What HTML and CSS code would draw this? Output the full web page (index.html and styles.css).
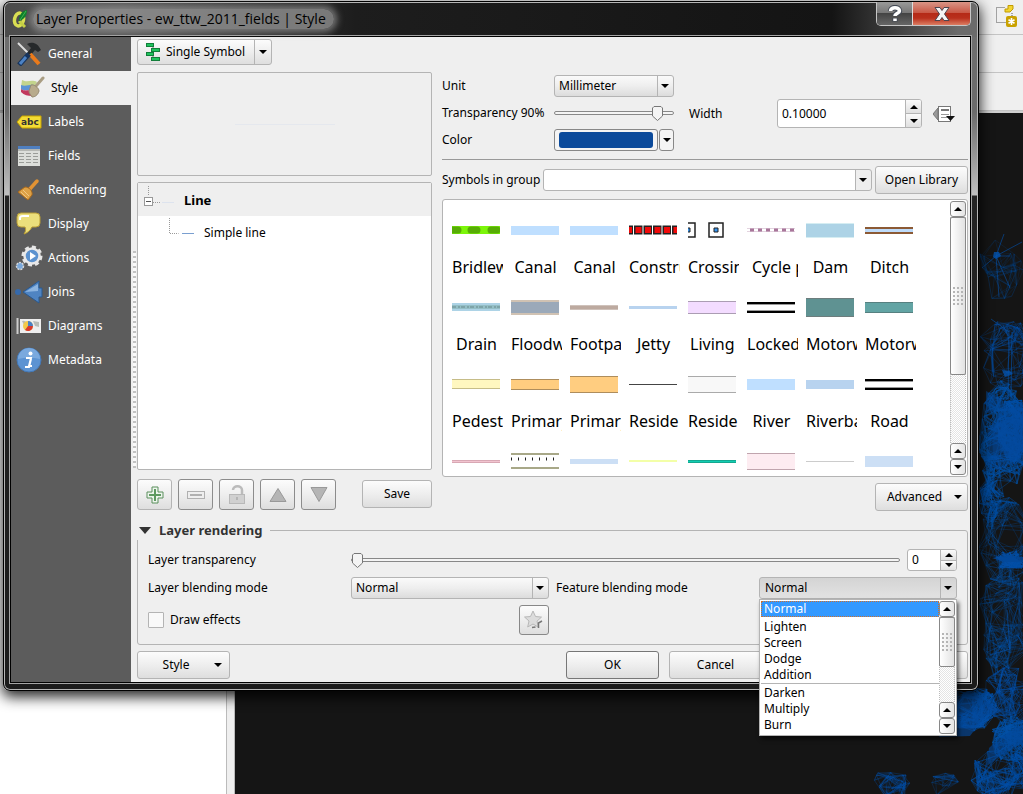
FILE: index.html
```html
<!DOCTYPE html>
<html lang="en">
<head>
<meta charset="utf-8">
<title>Layer Properties</title>
<link rel="stylesheet" href="styles.css">
</head>
<body>
<div class="desktop">
  <div class="toolbars">
    <div class="toolbar first">
      <svg width="22" height="24" viewBox="0 0 22 24"><path d="M17 9V18.500H1.500V3.500H10" fill="none" stroke="#555" stroke-dasharray="1 1"/><path d="M10 5h3V1.500h5V5l-3 3h-5z" fill="#f2d531" stroke="#c29b00"/><rect x="11" y="12" width="11" height="11" rx="2" fill="#c9a100"/><path d="M16.500 14v7M13.500 15.800l6 3.400M19.500 15.800l-6 3.400" stroke="#fff" stroke-width="1.600"/></svg>
    </div>
    <div class="toolbar"></div>
    <div class="toolbar"></div>
  </div>
  <div class="workspace">
    <div class="layers"></div>
    <div class="map">
      <svg id="network" class="network" width="160" height="680" viewBox="863 114 160 680"></svg>
    </div>
  </div>
</div>

<section class="dialog" aria-label="Layer Properties">
  <header class="titlebar">
    <svg class="logo" width="20" height="20" viewBox="0 0 20 20"><ellipse cx="8" cy="10.500" rx="4.500" ry="6.500" fill="none" stroke="#d9de52" stroke-width="3.500" transform="rotate(12 8 10.500)"/><path d="M8 12l6 6" stroke="#c5cf45" stroke-width="3"/><path d="M8 12C8 7 10 2 16 1c0 5-2 9-8 11z" fill="#0d7f2a"/><path d="M9 11l6-9" stroke="#3fb24f"/></svg>
    <h1>Layer Properties - ew_ttw_2011_fields | Style</h1>
    <div class="caption">
      <button class="help" aria-label="Help"><svg width="16" height="18" viewBox="0 0 16 18"><path d="M3.500 6c0-4.500 9-4.500 9 0 0 2.500-4.500 2-4.500 5M8 13v3.500" fill="none" stroke="#444a55" stroke-width="5.500"/><path d="M3.500 6c0-4.500 9-4.500 9 0 0 2.500-4.500 2-4.500 5M8 13.500v2.500" fill="none" stroke="#fff" stroke-width="3.500"/></svg></button>
      <button class="close" aria-label="Close"><svg width="16" height="14" viewBox="0 0 16 14"><path d="M1 .5h5l2 3 2-3h5l-4.500 6.500 4.500 6.500h-5l-2-3-2 3h-5l4.500-6.500z" fill="#f4f4f4" stroke="#4d4650"/></svg></button>
    </div>
  </header>

  <div class="client">
    <nav class="sidebar">
      <a href="#general"><svg width="24" height="24" viewBox="0 0 24 24"><path d="M1 1l11 11" stroke="#ddd" stroke-width="2"/><path d="M10 2c5-3 11-1 14 6l-3 2-3-2-5 6-3-3 4-5z" fill="#26292b"/><path d="M13 12l9 10" stroke="#ea7a1b" stroke-width="4"/><path d="M12 12L2 23" stroke="#17345c" stroke-width="5"/><path d="M9 15l-6 7" stroke="#4c82c4" stroke-width="3"/></svg><span>General</span></a>
      <a href="#style" class="current"><svg width="26" height="24" viewBox="0 0 26 24"><path d="M3 4c6 3 9-1 15 2l-3 5c-4-2-8 1-13 0z" fill="#c3d48c"/><path d="M2 9c5 2 8-1 13 0l-1 6c-5-2-8 1-12-2z" fill="#5b94d6"/><path d="M2 13c4 3 8 0 12 2l-1 5c-4 0-8-1-11-4z" fill="#c2385d"/><path d="M17 10l7-8" stroke="#a99d83" stroke-width="3" stroke-linecap="round"/><path d="M12 9c3-1 8 3 8 6-1 4-4 6-7 6-2-3-3-4-3-6z" fill="#b8ab8c" stroke="#968b72"/></svg><span>Style</span></a>
      <a href="#labels"><svg width="26" height="24" viewBox="0 0 26 24"><path d="M6 6h19v12H6L1 12z" fill="#f3dc35" stroke="#c9a400"/><text class="abc" x="5" y="15">abc</text></svg><span>Labels</span></a>
      <a href="#fields"><svg width="24" height="24" viewBox="0 0 24 24"><rect x="1" y="2" width="22" height="20" fill="#dcdeda"/><path d="M1 3.500h22" stroke="#4f7fc0" stroke-width="3"/><path d="M1 6h22" stroke="#b5b7b3" stroke-width="2"/><path d="M2 9.500h20M2 12.500h20M2 15.500h20M2 18.500h20" stroke="#9a9c98" stroke-dasharray="5 2"/></svg><span>Fields</span></a>
      <a href="#rendering"><svg width="24" height="24" viewBox="0 0 24 24"><path d="M12 12l8-9" stroke="#e19334" stroke-width="3.500" stroke-linecap="round"/><path d="M8 9c4 0 8 4 7 8l-4 5L1 14z" fill="#dda146" stroke="#a9691c"/><path d="M4 14l6 6M6 12l6 6" stroke="#f0c682"/></svg><span>Rendering</span></a>
      <a href="#display"><svg width="26" height="24" viewBox="0 0 26 24"><path d="M5 1h15q4 0 4 4v6q0 4-4 4h-4c-2 4-5 6-8 7 2-3 2-5 1-7H5q-4 0-4-4V5q0-4 4-4z" fill="#ebdf7c" stroke="#b99d35"/><path d="M4 8V6q0-2 3-2h6" fill="none" stroke="#fff" stroke-width="2"/></svg><span>Display</span></a>
      <a href="#actions"><svg width="26" height="26" viewBox="0 0 26 26"><circle cx="16" cy="11" r="9" fill="none" stroke="#e6e6e6" stroke-width="3" stroke-dasharray="4 3"/><circle cx="16" cy="11" r="7.500" fill="#5c92cf" stroke="#e8e8e8" stroke-width="2.500"/><path d="M14 7l6 4-6 4z" fill="#fff"/><circle cx="4" cy="21" r="3.500" fill="#7ba9dc" stroke="#d8d8d8" stroke-width="1.500" stroke-dasharray="2 1"/></svg><span>Actions</span></a>
      <a href="#joins"><svg width="28" height="24" viewBox="0 0 28 24"><circle cx="3" cy="12" r="3" fill="#3569ab"/><path d="M8 12L24 1v7h3v9h-3v6z" fill="#4f84c2" stroke="#29588f"/><path d="M10 12L23 4v7z" fill="#8cb4e0"/></svg><span>Joins</span></a>
      <a href="#diagrams"><svg width="26" height="24" viewBox="0 0 26 24"><rect x="4" y="5" width="21" height="14" fill="#eee"/><path d="M6 7q3-1 5 2l-2 4zM17 7l6 1v5l-4-1z" fill="#b8bbb6"/><path d="M1.500 4v16" stroke="#ccc" stroke-width="2"/><circle cx="12" cy="12" r="5" fill="#f2c94a"/><path d="M12 12V7a5 5 0 0 1 5 5z" fill="#4a7fc4"/><path d="M12 12h5a5 5 0 0 1-8 4z" fill="#d8392d"/></svg><span>Diagrams</span></a>
      <a href="#metadata"><svg width="26" height="26" viewBox="0 0 26 26"><circle cx="13" cy="13" r="12" fill="#5c93d2" stroke="#4478b6"/><path d="M2 12A11 11 0 0 1 24 12Q13 9 2 12z" fill="#7aa9de"/><circle cx="14.500" cy="6.500" r="2" fill="#fff"/><path d="M10 11h5l-2 8h3M9 20h4l2-8" fill="none" stroke="#fff" stroke-width="2"/></svg><span>Metadata</span></a>
    </nav>
    <div class="splitter"></div>

    <main class="panel">
      <div class="renderer">
        <button class="btn split"><svg width="14" height="20" viewBox="0 0 14 20"><path d="M7 3v13" stroke="#777"/><g fill="#1fc35d" stroke="#137e3b"><rect x=".5" y="1.500" width="7" height="3"/><rect x="5.500" y="6.500" width="8" height="3"/><rect x=".5" y="10.500" width="7" height="3"/><rect x="5.500" y="15.500" width="8" height="3"/></g></svg><span>Single Symbol</span><i class="drop"></i></button>
      </div>

      <div class="columns">
        <div class="left">
          <div class="preview"><div></div></div>
          <div class="tree">
            <div class="node root"><svg width="36" height="32" viewBox="0 0 36 32"><path d="M10.500 2v10M15 18.500h8" stroke="#999" stroke-dasharray="1 1"/><rect x="6.500" y="13.500" width="8" height="8" fill="#fff" stroke="#999"/><path d="M8 17.500h5" stroke="#555"/><path d="M24 18.500h12" stroke="#dde3ee"/></svg><b>Line</b></div>
            <div class="node"><svg width="56" height="32" viewBox="0 0 56 32"><path d="M31.500 1v15.500h9" fill="none" stroke="#999" stroke-dasharray="1 1"/><path d="M44 16.500h16" stroke="#7a9fd0"/></svg><span>Simple line</span></div>
          </div>
          <div class="tools">
            <button class="btn tool" aria-label="Add"><svg width="20" height="20" viewBox="0 0 20 20"><path d="M7 2h6v5h5v6h-5v5H7v-5H2V7h5z" fill="#eef5ee" stroke="#5a8f5c"/><path d="M10 4v12M4 10h12" stroke="#5f9a61" stroke-width="2"/></svg></button>
            <button class="btn tool dark" aria-label="Remove"><svg width="20" height="20" viewBox="0 0 20 20"><rect x="1.500" y="6.500" width="17" height="7" fill="#eee" stroke="#b0b0b0"/><path d="M4 10h12" stroke="#b0b0b0" stroke-width="2"/></svg></button>
            <button class="btn tool dark" aria-label="Lock"><svg width="20" height="20" viewBox="0 0 20 20"><path d="M6 5c0-5 9-5 9 0v5" fill="none" stroke="#bbb" stroke-width="2.500"/><rect x="2.500" y="9.500" width="15" height="9" fill="#d0d0d0" stroke="#b8b8b8"/><path d="M10 12v3" stroke="#999"/></svg></button>
            <button class="btn tool dark" aria-label="Move up"><svg width="20" height="20" viewBox="0 0 20 20"><path d="M10 3.500l8 13H2z" fill="#b5b5b5" stroke="#999"/></svg></button>
            <button class="btn tool dark" aria-label="Move down"><svg width="20" height="20" viewBox="0 0 20 20"><path d="M10 16.500l8-14H2z" fill="#b5b5b5" stroke="#999"/></svg></button>
            <button class="btn save">Save</button>
          </div>
        </div>

        <div class="right">
          <div class="props">
            <div class="fields">
              <label for="unit">Unit</label>
              <span class="combo"><select id="unit"><option>Millimeter</option></select></span>
              <label for="alpha">Transparency 90%</label>
              <input id="alpha" type="range" min="0" max="100" value="91">
              <span>Color</span>
              <span class="color"><button class="swatch" aria-label="Color"><i></i></button><button class="more" aria-label="Color menu"><i class="drop"></i></button></span>
            </div>
            <div class="width">
              <label for="width">Width</label>
              <span class="spin"><input id="width" type="text" value="0.10000"><span class="steps"><button aria-label="Increase"><i class="up"></i></button><button aria-label="Decrease"><i class="drop"></i></button></span></span>
              <button class="override" aria-label="Data defined override"><svg width="22" height="18" viewBox="0 0 22 18"><path d="M5 3v12L0 9z" fill="#999" stroke="#777"/><rect x="5.500" y="1.500" width="12" height="15" fill="#fff" stroke="#777"/><path d="M8 5h8" stroke="#777" stroke-width="2"/><path d="M8 9.500h8M8 12.500h8" stroke="#999"/><path d="M13 11h9l-4.500 5z" fill="#111"/></svg></button>
            </div>
          </div>
          <hr>
          <div class="group">
            <label for="group">Symbols in group</label>
            <span class="combo edit"><select id="group"><option></option></select></span>
            <button class="btn">Open Library</button>
          </div>
          <div class="library">
            <ul class="symbols">
              <li><span><svg width="48" height="8"><path d="M0 4h48" stroke="#7cf50a" stroke-width="8"/><path d="M0 4h6M19 4h6M39 4h6" stroke="#57ad05" stroke-width="7" stroke-linecap="round"/></svg></span><b>Bridlew</b></li>
              <li><span><i class="s9 sky"></i></span><b class="mid">Canal</b></li>
              <li><span><i class="s9 sky"></i></span><b class="mid">Canal</b></li>
              <li><span><svg width="48" height="10"><path d="M0 5h48" stroke="#222" stroke-width="9"/><path d="M0 5h48" stroke="#fff" stroke-width="10" stroke-dasharray="1 8.500" stroke-dashoffset="-4"/><path d="M-3 5h51" stroke="#f00a0a" stroke-width="6" stroke-dasharray="6 3.500" stroke-dashoffset="0"/></svg></span><b>Constru</b></li>
              <li><span><svg width="48" height="16"><path d="M0 1h7v14H0M21 1h14v14H21z" fill="#fff" stroke="#222" stroke-width="1.500"/><path d="M0 6h2v4H0M26 6h4v4h-4z" fill="#3594f0" stroke="#222"/></svg></span><b>Crossin</b></li>
              <li><span><svg width="48" height="4"><path d="M0 .5h48M0 3.500h48" stroke="#e3d3df"/><path d="M3 2h45" stroke="#a8769a" stroke-width="3" stroke-dasharray="4 4"/></svg></span><b class="lead">Cycle p</b></li>
              <li><span><i class="s15 dam"></i></span><b class="mid">Dam</b></li>
              <li><span><i class="s7 ditch"></i></span><b class="mid">Ditch</b></li>

              <li><span><svg width="48" height="8"><path d="M0 4h48" stroke="#add3e6" stroke-width="8"/><path d="M0 4h48" stroke="#94bfc6" stroke-width="4"/><path d="M0 4h48" stroke="#68898d" stroke-dasharray="4 2 2 1"/></svg></span><b class="mid">Drain</b></li>
              <li><span><i class="s15 flood"></i></span><b>Floodw</b></li>
              <li><span><i class="s5 foot"></i></span><b>Footpa</b></li>
              <li><span><i class="s3 jetty"></i></span><b class="mid">Jetty</b></li>
              <li><span><i class="s13 living"></i></span><b class="nudge">Living s</b></li>
              <li><span><i class="s11 road"></i></span><b>Locked</b></li>
              <li><span><i class="s19 motor"></i></span><b>Motorw</b></li>
              <li><span><i class="s11 link"></i></span><b>Motorw</b></li>

              <li><span><i class="s10 ped"></i></span><b>Pedest</b></li>
              <li><span><i class="s11 primary"></i></span><b>Primary</b></li>
              <li><span><i class="s17 primary wide"></i></span><b>Primary</b></li>
              <li><span><i class="s1"></i></span><b>Reside</b></li>
              <li><span><i class="s17 resid"></i></span><b>Reside</b></li>
              <li><span><i class="s11 sky"></i></span><b class="mid">River</b></li>
              <li><span><i class="s9 bank"></i></span><b>Riverba</b></li>
              <li><span><i class="s11 road"></i></span><b class="mid">Road</b></li>

              <li><span><i class="s3 pink"></i></span></li>
              <li><span><svg width="48" height="16"><path d="M0 1h48M0 15h48" stroke="#a8a888" stroke-width="2"/><path d="M0 6h48" stroke="#222" stroke-width="3" stroke-dasharray="1 6"/></svg></span></li>
              <li><span><i class="s5 pale"></i></span></li>
              <li><span><i class="s1 lime"></i></span></li>
              <li><span><i class="s3 teal"></i></span></li>
              <li><span><i class="s17 rose"></i></span></li>
              <li><span><i class="s1 gray"></i></span></li>
              <li><span><i class="s11 pale"></i></span></li>
            </ul>
            <div class="scroll"><button aria-label="Up"><i class="up"></i></button><div class="track"><div class="thumb tall"><i></i></div></div><button aria-label="Page up"><i class="up"></i></button><button aria-label="Down"><i class="drop"></i></button></div>
          </div>
          <button class="btn menu advanced"><span>Advanced</span><i class="drop"></i></button>
        </div>
      </div>

      <fieldset class="rendering">
        <legend><i class="fold"></i>Layer rendering</legend>
        <div class="row">
          <label for="opacity">Layer transparency</label>
          <input id="opacity" type="range" min="0" max="100" value="0">
          <span class="spin small"><input type="text" value="0" aria-label="Layer transparency value"><span class="steps"><button aria-label="Increase"><i class="up"></i></button><button aria-label="Decrease"><i class="drop"></i></button></span></span>
        </div>
        <div class="row blend">
          <label for="blend">Layer blending mode</label>
          <span class="combo"><select id="blend"><option>Normal</option></select></span>
          <label for="feature" class="second">Feature blending mode</label>
          <span class="combo open"><select id="feature"><option>Normal</option></select>
            <span class="popup">
              <span class="options">
                <span class="chosen">Normal</span><span>Lighten</span><span>Screen</span><span>Dodge</span><span>Addition</span><span class="ruled">Darken</span><span>Multiply</span><span>Burn</span>
              </span>
              <span class="scroll"><button aria-label="Up"><i class="up"></i></button><span class="track"><span class="thumb short"><i></i></span></span><button aria-label="Page up"><i class="up"></i></button><button aria-label="Down"><i class="drop"></i></button></span>
            </span>
          </span>
        </div>
        <div class="row blend effects">
          <label class="check"><input type="checkbox">Draw effects</label>
          <button class="btn star" aria-label="Customize effects"><svg width="20" height="20" viewBox="0 0 20 20"><path d="M9 1l2.500 5.500 6 .6-4.500 4 1.300 6L9 14l-5.300 3 1.300-6-4.500-4 6-.5z" fill="#dcdcdc" stroke="#b8b8b8"/><path d="M14.500 18v-5l3.500-2M8 17.500l3.500-.5" fill="none" stroke="#777" stroke-width="1.500"/></svg></button>
        </div>
      </fieldset>

      <footer class="actions">
        <button class="btn menu"><span>Style</span><i class="drop"></i></button>
        <button class="btn default">OK</button>
        <button class="btn">Cancel</button>
        <button class="btn" aria-label="Apply"></button>
        <button class="btn" aria-label="Help"></button>
      </footer>
    </main>
  </div>
</section>
<script src="network.js"></script>
</body>
</html>
```

FILE: network.js
```js
// Draws the commuter-flow network on the map canvas with a fixed seed.
(function () {
  var svg = document.getElementById('network');
  var ns = 'http://www.w3.org/2000/svg';
  var seed = 11;
  function rnd() {
    seed = (seed * 16807) % 2147483647;
    return seed / 2147483647;
  }
  function path(d, stroke, opacity, fill) {
    var p = document.createElementNS(ns, 'path');
    p.setAttribute('d', d);
    p.setAttribute('stroke', stroke);
    p.setAttribute('fill', fill || 'none');
    p.setAttribute('opacity', opacity);
    svg.appendChild(p);
  }
  // Lines between random places inside an ellipse
  // cx, cy, rx, ry, number of places, longest link, opacity
  var areas = [
    [1000, 270, 26, 34, 26, 30, 0.16], [1006, 350, 28, 44, 50, 28, 0.28],
    [1003, 440, 24, 60, 170, 20, 0.42], [1014, 430, 18, 34, 90, 20, 0.45],
    [990, 500, 12, 26, 40, 18, 0.4], [1004, 540, 28, 50, 60, 32, 0.26],
    [1012, 560, 18, 10, 40, 22, 0.5], [1004, 625, 28, 60, 70, 34, 0.26],
    [972, 708, 26, 24, 120, 18, 0.45], [1008, 695, 26, 34, 60, 28, 0.28],
    [1012, 740, 22, 24, 100, 20, 0.42], [1002, 775, 34, 26, 90, 26, 0.34],
    [892, 784, 18, 18, 26, 24, 0.3], [946, 784, 18, 14, 12, 26, 0.25]
  ];
  areas.forEach(function (s) {
    var pts = [], d = '', i, j;
    for (i = 0; i < s[4]; i++) {
      var a = rnd() * 6.283, r = Math.sqrt(rnd());
      pts.push([s[0] + Math.cos(a) * r * s[2], s[1] + Math.sin(a) * r * s[3]]);
    }
    for (i = 0; i < pts.length; i++) {
      var left = 5;
      for (j = i + 1; j < pts.length && left; j++) {
        if (Math.hypot(pts[i][0] - pts[j][0], pts[i][1] - pts[j][1]) < s[5]) {
          d += 'M' + pts[i][0].toFixed(1) + ' ' + pts[i][1].toFixed(1) + 'L' + pts[j][0].toFixed(1) + ' ' + pts[j][1].toFixed(1);
          left--;
        }
      }
    }
    path(d, '#0350a8', s[6]);
  });
  path('M996 256L1004 234M996 256L1022 242M996 256L1010 288M996 256L999 297M996 256L982 268M996 256L1010 256M1009 330L1008 400M1012 332L1011 400M1003 325L1008 336M991 319L1009 332M1007 610L1010 649L990 655M1010 649L1003 628', '#0452ad', 0.6);
  path('M994 252h5l2 4-5 3-3-2zM1002 370l8 1 3 3-8 3z', 'none', 0.8, '#0452ad');
  path('M986 391L1000 398 1008 408 1023 402V450L1012 462 1000 450 992 472 986 462 988 430 1000 412 986 413z', 'none', 0.55, '#04489a');
  path('M994 425Q1008 415 1023 420V460Q1008 466 996 470 990 445 994 425z', 'none', 0.4, '#04489a');
  path('M957 700L968 690 985 700 1002 712 985 716 970 736 939 737V728z', 'none', 0.65, '#04489a');
  path('M1023 724Q1003 734 989 748L987 766 1000 756 1023 742z', 'none', 0.6, '#04489a');
  path('M992 558L1010 555 1023 557V562L1004 562z', 'none', 0.8, '#04489a');
}());
```

FILE: styles.css
```css
* { box-sizing: border-box; }
body {
  margin: 0;
  min-height: 100vh;
  overflow: hidden;
  font: 12px/16px "Noto Sans", "DejaVu Sans", sans-serif;
  color: #000;
  background: #151515;
}
button, input, select { font: inherit; color: inherit; margin: 0; }
button { padding: 0; }

/* Application window behind the dialog */
.desktop { display: flex; flex-direction: column; height: 100vh; }
.toolbars { background: #efefef; border-bottom: 2px solid #cfcfcf; }
.toolbar { height: 38px; border-bottom: 1px solid #c4c4c4; }
.toolbar.first { height: 35px; display: flex; justify-content: flex-end; align-items: flex-start; padding: 4px 6px 0 0; }
.workspace { flex: 1; display: flex; min-height: 0; }
.layers { flex: 0 0 227px; background: #fff; border-right: 1px solid #bbb; }
.map { flex: 1; display: flex; justify-content: flex-end; align-items: flex-end; overflow: hidden; background: #151515; border-left: 1px solid #bbb; box-shadow: -7px 0 0 #efefef; margin-left: 7px; }
.network { display: block; }

/* Dialog frame */
.dialog {
  position: absolute;
  left: 3px; right: 44px; top: 1px;
  padding: 0 7px 7px 6px;
  border: 1px solid #000;
  border-radius: 7px;
  background:
    linear-gradient(90deg, #4b4b4b, #585858 12%, #1d1d1d 36%, #141414 85%, #6b6b6b 98%) top / 100% 35px no-repeat,
    linear-gradient(#707070, #6b6b6b 110px, #c0c0c0 193px, #242424 194px, #1b1b1b);
  box-shadow: inset 0 0 0 1px #b5b5b5, 0 5px 14px 1px rgba(0,0,0,.85);
}
.titlebar { display: flex; align-items: center; height: 34px; }
.logo { margin: 0 2px 0 1px; }
.titlebar h1 {
  margin: 0; padding: 0 8px 0 3px;
  font: 14px/20px "Open Sans", "Noto Sans", sans-serif;
  border-radius: 10px;
  background: rgba(150,150,150,.75);
  box-shadow: 0 0 7px 3px rgba(150,150,150,.75);
}
.caption { display: flex; align-self: flex-start; margin-left: auto; border: 1px solid #c6c6c6; border-top: 0; border-radius: 0 0 5px 5px; overflow: hidden; }
.caption button { display: flex; align-items: center; justify-content: center; height: 23px; border: 0; }
.help { width: 35px; background: linear-gradient(#999, #777 48%, #444 50%, #666); }
.caption .close { width: 58px; border-left: 1px solid #ddd; background: linear-gradient(#d99486, #c95a48 46%, #b52a17 50%, #b9301d 70%, #dc7d62); }

.client { display: flex; background: #efefef; border: 1px solid #000; box-shadow: 0 0 0 1px #a5a5a5; }
.sidebar { flex: 0 0 120px; background: #5c5c5c; }
.sidebar a { display: flex; align-items: center; gap: 5px; height: 34px; padding-left: 4px; color: #fff; text-decoration: none; }
.sidebar svg { flex: 0 0 28px; }
.sidebar .current { background: #efefef; color: #000; padding-left: 7px; }
.abc { font: bold 9px "DejaVu Sans", sans-serif; fill: #333; }
.splitter { flex: 0 0 6px; padding: 214px 1px 214px 2px; background: linear-gradient(#c2c2c2 50%, #fafafa 0) 0 0 / 3px 5px repeat-y content-box; }

.panel { flex: 1; min-width: 0; padding: 2px 2px 3px 0; }

/* Buttons and glyphs */
.btn {
  display: inline-flex; align-items: center; justify-content: center;
  height: 28px; border: 1px solid #b4b4b4; border-radius: 3px;
  background: linear-gradient(#fcfcfc, #eee 50%, #dedede);
}
.drop, .up { display: block; flex: none; width: 0; border: 4px solid transparent; }
.drop { border-top-color: #000; border-bottom: 0; }
.up { border-bottom-color: #000; border-top: 0; }
.split { height: 26px; padding-left: 8px; gap: 6px; }
.split span { padding-right: 9px; line-height: 24px; border-right: 1px solid #b4b4b4; margin-right: -6px; }
.split .drop { margin: 0 4px; }

.combo { position: relative; display: flex; min-width: 0; }
.combo select {
  appearance: none; width: 100%; height: 22px; padding: 0 4px;
  border: 1px solid #b4b4b4; border-radius: 3px;
  background: linear-gradient(#fafafa, #eee 50%, #dcdcdc);
}
.combo::after {
  content: ""; position: absolute; right: 5px; top: 9px;
  border: 4px solid transparent; border-top-color: #000; border-bottom: 0;
}
.combo::before { content: ""; position: absolute; right: 16px; top: 1px; bottom: 1px; border-left: 1px solid #b4b4b4; }
.combo.edit select { background: linear-gradient(90deg, transparent calc(100% - 16px), #eee 0), #fff; }
.combo.open select { background: linear-gradient(#d4d4d4, #e2e2e2); padding-left: 5px; }

/* Sliders */
input[type="range"] { appearance: none; width: 100%; min-width: 0; height: 16px; background: none; }
input[type="range"]::-webkit-slider-runnable-track { height: 4px; border: 1px solid #888; border-radius: 2px; background: #f4f4f4; }
input[type="range"]::-webkit-slider-thumb {
  appearance: none; width: 11px; height: 15px; margin-top: -6px;
  background: url("data:image/svg+xml,%3Csvg xmlns='http://www.w3.org/2000/svg' width='11' height='15'%3E%3Cpath d='M2 .5h7l1.500 1.500v8l-5 4.500-5-4.500V2z' fill='%23f4f4f4' stroke='%23777'/%3E%3C/svg%3E");
}

/* Spin boxes */
.spin { display: flex; height: 29px; border: 1px solid #b4b4b4; border-radius: 3px; background: #fff; overflow: hidden; }
.spin input { flex: 1; min-width: 0; border: 0; padding: 0 4px; background: none; }
.steps { display: flex; flex-direction: column; flex: 0 0 16px; border-left: 1px solid #b4b4b4; }
.steps button { flex: 1; display: flex; align-items: center; justify-content: center; border: 0; background: linear-gradient(#fafafa, #e0e0e0); }
.steps button + button { border-top: 1px solid #b4b4b4; }
.spin.small { height: 22px; }

/* Symbol editor */
.renderer { display: flex; }
.columns { display: grid; grid-template-columns: minmax(0, 295fr) minmax(0, 526fr); gap: 10px; margin-top: 7px; }
.left, .right { display: flex; flex-direction: column; }
.preview { display: flex; align-items: center; justify-content: center; height: 104px; border: 1px solid #b4b4b4; border-radius: 2px; }
.preview div { width: 100px; border-top: 1px solid #e5e8ee; }
.tree { flex: 1; margin: 6px 0 9px; background: #fff; border: 1px solid #b4b4b4; border-radius: 2px; }
.node { display: flex; align-items: center; height: 33px; gap: 10px; }
.node b { font-size: 13px; }
.root { background: #efefef; }
.tools { display: flex; gap: 6px; margin-bottom: 1px; }
.tool { width: 35px; height: 31px; }
.dark { border-color: #8c8c8c; }
.save { flex: 0 0 70px; margin-left: auto; margin-top: 1px; }

.props { display: flex; }
.fields { display: grid; grid-template-columns: 112px 120px; grid-auto-rows: 27px; align-items: center; }
.color { display: flex; gap: 1px; }
.color button { height: 22px; border: 1px solid #888; border-radius: 3px; background: #f4f4f4; }
.swatch { flex: 1; padding: 2px 4px; }
.color .swatch { padding: 2px 4px; }
.swatch i { display: block; height: 16px; border-radius: 3px; background: #0b4a9b; }
.more { width: 15px; display: flex; align-items: center; justify-content: center; }
.width { flex: 1; display: flex; align-items: center; margin: 2px 13px 0 15px; }
.width label { flex: 1; }
.width .spin { flex: 0 0 145px; }
.override { border: 0; background: none; margin-left: 11px; height: 18px; }
hr { width: 100%; margin: 6px 0 6px; border: 0; border-top: 1px solid #999; }
.group { display: flex; align-items: center; gap: 3px; }
.group .combo { flex: 1; }
.group .btn { flex: 0 0 93px; }

.library { display: flex; height: 278px; margin: 5px 0 6px; padding: 1px; background: #fff; border: 1px solid #b4b4b4; border-radius: 3px; }
.symbols { flex: 1; display: grid; grid-template-columns: repeat(auto-fill, 51px); grid-auto-rows: 62px; gap: 15px 8px; margin: 0; padding: 16px 0 0 8px; list-style: none; overflow: hidden; }
.symbols li { overflow: hidden; }
.symbols li > span { display: flex; align-items: center; height: 26px; width: 48px; }
.symbols svg { display: block; }
.symbols b { display: block; margin-top: 12px; font-size: 16px; line-height: 24px; font-weight: 400; white-space: nowrap; }
.symbols .mid { text-align: center; width: 49px; }
.symbols .lead { padding-left: 5px; }
.symbols .nudge { padding-left: 2px; }
.symbols i { display: block; width: 48px; }
.s1 { height: 1px; background: #444; }
.s3 { height: 3px; }
.s5 { height: 5px; }
.s7 { height: 7px; }
.s9 { height: 9px; }
.s10 { height: 10px; }
.s11 { height: 11px; }
.s13 { height: 13px; }
.s15 { height: 15px; }
.s17 { height: 17px; }
.s19 { height: 19px; }
.sky { background: #bfdfff; }
.dam { background: #add3e6; border-block: 1px solid #d5edf2; }
.ditch { background: #bfdcfa; border-block: 2px solid #8c5a35; }
.flood { background: #9ba9b9; border-block: 2px solid #d0c2b3; }
.foot { background: #bdaaa0; border-block: 1px solid #cfc2bb; }
.jetty { background: #b8d3ef; }
.living { background: #f3dcff; border-block: 1px solid #ab9db3; }
.road { border-block: 2px solid #000; box-shadow: inset 0 1px #999, inset 0 -1px #999; background: #fff; }
.motor { background: #5f9292; border-block: 1px solid #6d7d7d; }
.link { background: #62a4a4; border-block: 1px solid #568080; }
.ped { background: #fff7c0; border-block: 1px solid #c6bd88; }
.primary { background: #ffcd80; border-block: 1px solid #ae8d5c; }
.resid { background: #f8f8f8; border-block: 1px solid #aaa; }
.bank { background: #b8d3ef; }
.pink { background: #f2c4d0; border-block: 1px solid #d8a8b4; }
.pale { background: #ccdff5; }
.lime { height: 2px; background: #f3ffa8; }
.teal { background: #12cdb2; border-block: 1px solid #14a890; }
.rose { background: #fdecf1; border-block: 1px solid #c0a5ae; }
.gray { background: #ccc; }

/* Scroll bars */
.scroll { display: flex; flex-direction: column; flex: 0 0 16px; }
.scroll button { flex: 0 0 16px; display: flex; align-items: center; justify-content: center; border: 1px solid #888; border-radius: 3px; background: linear-gradient(90deg, #fff, #e4e4e4); }
.track { flex: 1; display: block; border-inline: 1px dotted #bbb; background: repeating-conic-gradient(#e4e4e4 0 25%, #fff 0 50%) 0 0 / 2px 2px; }
.thumb { display: flex; align-items: center; justify-content: center; margin: 0 -1px; border: 1px solid #888; border-radius: 2px; background: linear-gradient(90deg, #fff, #e2e2e2); }
.thumb i { width: 12px; height: 20px; background: radial-gradient(circle, #b5b5b5 1px, transparent 1px) 0 0 / 4px 4px; }
.tall { height: 70%; }
.short { height: 50px; }

.menu { gap: 12px; padding-left: 6px; }
.advanced { width: 93px; align-self: flex-end; }

/* Layer rendering */
.rendering { min-width: 0; margin: 9px 0 6px; padding: 9px 10px 9px; border: 1px solid #b4b4b4; border-radius: 3px; }
.rendering legend { display: flex; align-items: center; gap: 8px; height: 20px; margin-left: -11px; padding: 0 7px 0 2px; background: #efefef; font-weight: 700; font-size: 13px; color: #333; }
.fold { width: 0; border: 6px solid transparent; border-top: 7px solid #333; border-bottom: 0; }
.row { display: grid; grid-template-columns: 203px minmax(0, 1fr) 50px; align-items: center; column-gap: 0; height: 22px; }
.row input[type="range"] { width: calc(100% - 7px); }
.blend { grid-template-columns: 203px minmax(0, 1fr) 210px minmax(0, 1fr); margin-top: 6px; }
.second { padding-left: 7px; }
.effects { height: 30px; }
.check { display: flex; align-items: center; gap: 6px; }
.check input { appearance: none; width: 16px; height: 16px; border: 1px solid #b4b4b4; border-radius: 1px; background: #f9f9f9; }
.star { width: 30px; height: 30px; justify-self: end; border-color: #888; }

.popup { position: absolute; z-index: 2; top: 22px; left: 0; right: 0; display: flex; padding: 1px; background: #fff; border: 1px solid #b4b4b4; box-shadow: 2px 3px 4px rgba(0,0,0,.6); }
.options { flex: 1; display: block; padding-bottom: 1px; }
.options span { display: block; height: 16px; padding-left: 3px; }
.options .chosen { margin-bottom: 2px; padding-left: 2px; border: 1px dotted #d0702a; line-height: 14px; background: #3399ff; color: #fff; }
.options .ruled { height: 18px; padding-top: 1px; border-top: 1px solid #b4b4b4; }

.actions { display: grid; grid-template-columns: 93px 1fr repeat(4, 93px); column-gap: 10px; }
.actions .default { grid-column: 3; border-color: #777; }
.actions .menu { gap: 25px; padding-left: 18px; }
```
